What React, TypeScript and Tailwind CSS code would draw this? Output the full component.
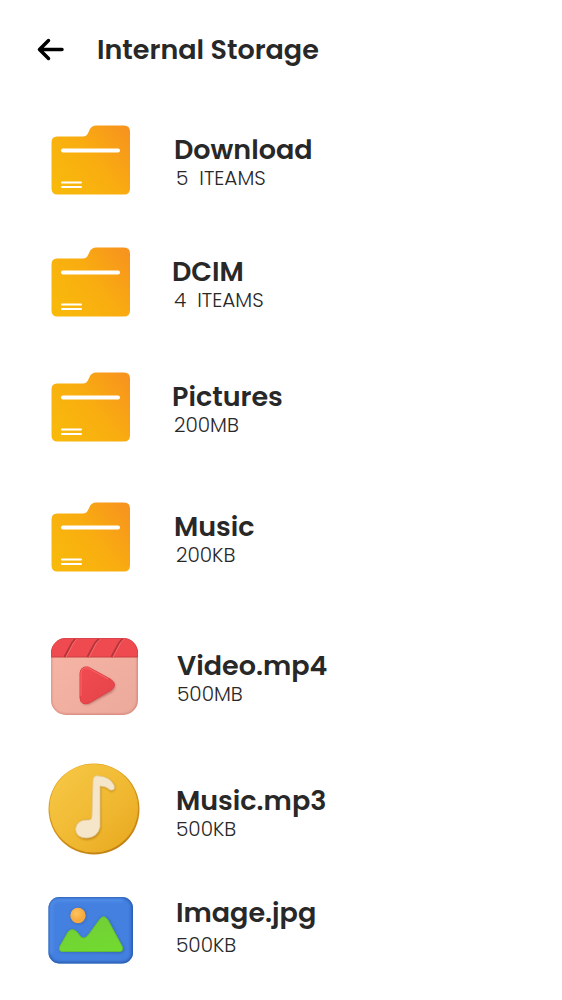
import React from "react";

type Kind = "folder" | "video" | "audio" | "image";

interface Entry {
  name: string;
  detail: string;
  kind: Kind;
  row: string;
  lines: string;
}

const entries: Entry[] = [
  { name: "Download", detail: "5  ITEAMS", kind: "folder", row: "h-[123px]", lines: "pl-[34px] pt-1" },
  { name: "DCIM", detail: "4  ITEAMS", kind: "folder", row: "h-[122px]", lines: "pl-8 pt-1" },
  { name: "Pictures", detail: "200MB", kind: "folder", row: "h-[127px]", lines: "pl-8 pt-1" },
  { name: "Music", detail: "200KB", kind: "folder", row: "h-[134px]", lines: "pl-[34px] pt-1" },
  { name: "Video.mp4", detail: "500MB", kind: "video", row: "h-[144px]", lines: "pl-[37px] pt-1" },
  { name: "Music.mp3", detail: "500KB", kind: "audio", row: "h-[122px]", lines: "pl-9 pt-2" },
  { name: "Image.jpg", detail: "500KB", kind: "image", row: "h-[119px]", lines: "pl-9 gap-1 pb-1.5" },
];

function FolderIcon() {
  return (
    <svg viewBox="0 0 92 92" className="size-[92px] shrink-0" aria-hidden="true">
      <defs>
        <linearGradient id="folder" x1="0" y1="0.8" x2="1" y2="0.1">
          <stop offset="0" stopColor="#f8b90b" />
          <stop offset="0.5" stopColor="#f9ad10" />
          <stop offset="1" stopColor="#f7931e" />
        </linearGradient>
      </defs>
      <path
        d="M9 22.5H35Q38.500 22.500 39.800 19.500L42 15Q44 11.500 48 11.500H76Q82 11.500 82 17.500V74.500Q82 80.500 76 80.500H9.500Q3.500 80.500 3.500 74.500V28.500Q3.500 22.500 9 22.500Z"
        fill="url(#folder)"
      />
      <path d="M15 36.500H70" stroke="#fff" strokeWidth="4" strokeLinecap="round" />
      <path d="M14 68.500H33M14 73H33" stroke="#fff" strokeWidth="2" strokeLinecap="round" />
    </svg>
  );
}

function VideoIcon() {
  return (
    <svg viewBox="0 0 92 92" className="size-[92px] shrink-0" aria-hidden="true">
      <defs>
        <linearGradient id="clip" x1="0" y1="0" x2="1" y2="1">
          <stop offset="0" stopColor="#f8b6a7" />
          <stop offset="1" stopColor="#eba99b" />
        </linearGradient>
        <linearGradient id="play" x1="0" y1="0" x2="1" y2="1">
          <stop offset="0" stopColor="#f04b50" />
          <stop offset="1" stopColor="#e5444a" />
        </linearGradient>
        <clipPath id="clipShape">
          <rect x="3" y="8" width="87" height="77" rx="15" />
        </clipPath>
        <filter id="clipBlur"><feGaussianBlur stdDeviation="1" /></filter>
      </defs>
      <g clipPath="url(#clipShape)">
        <rect x="3" y="8" width="87" height="77" fill="url(#clip)" />
        <rect x="2.500" y="6" width="87.500" height="79" rx="15" fill="none" stroke="#c06b62" strokeWidth="2" filter="url(#clipBlur)" opacity="0.7" />
        <path d="M3 8H90V27H3Z" fill="#ef4a4f" />
        <path d="M3 27H90" stroke="#c93f43" strokeWidth="1.200" />
        <path d="M28 8L24 13L16.500 27M52 8L47 13L39.500 27M75.500 8L71 13L63.500 27" fill="none" stroke="#b3343a" strokeWidth="2" />
        <path d="M29.500 8L25.500 13L18 27M53.500 8L48.500 13L41 27M77 8L72.500 13L65 27" fill="none" stroke="#fb7979" strokeWidth="0.800" />
        <path d="M3.500 26V21Q4 8.500 18 8.500H76Q87 8.500 89.500 21V26" fill="none" stroke="#d9434a" strokeWidth="1" />
      </g>
      <path d="M33 44Q34 37 41 38L63 50Q71 56 64 62L42 74Q34 77 33 68Z" fill="#9d4c48" opacity="0.6" filter="url(#clipBlur)" />
      <path d="M32 43Q33 36 40 37L63 49.500Q70 55 63 60L41 73Q33 76 32 68Z" fill="url(#play)" stroke="#df3f45" strokeWidth="1" />
      <path d="M33 66V43Q34 37 40 38L60 49" fill="none" stroke="#fb6666" strokeWidth="1" />
    </svg>
  );
}

function AudioIcon() {
  return (
    <svg viewBox="0 0 92 92" className="size-[92px] shrink-0" aria-hidden="true">
      <defs>
        <linearGradient id="disc" x1="0.100" y1="0.100" x2="0.900" y2="0.900">
          <stop offset="0" stopColor="#f6c643" />
          <stop offset="0.6" stopColor="#f0b831" />
          <stop offset="1" stopColor="#e9ab22" />
        </linearGradient>
        <linearGradient id="discEdge" x1="0.200" y1="0" x2="0.800" y2="1">
          <stop offset="0" stopColor="#e5a823" />
          <stop offset="1" stopColor="#c07f12" />
        </linearGradient>
        <filter id="discBlur"><feGaussianBlur stdDeviation="1.200" /></filter>
      </defs>
      <circle cx="46" cy="46" r="45.500" fill="url(#discEdge)" />
      <circle cx="45.800" cy="45.300" r="44.300" fill="url(#disc)" />
      <path
        d="M46 20Q46 13 52 14Q63 15 67 23Q68 28 63 29Q58 24 53 24V65Q51 76 39 77Q28 76 28 66Q30 56 42 57Q45 57 45 54Z"
        fill="#a56d0c"
        opacity="0.6"
        filter="url(#discBlur)"
      />
      <path
        d="M45 18Q45 12 51 13Q62 14 66 22Q68 28 62 27Q58 23 52 23V64Q50 74 39 75Q28 75 27.500 66Q29 56 41 57Q44 57 44 53Z"
        fill="#f5e5c9"
        stroke="#e3cb98"
        strokeWidth="0.800"
      />
    </svg>
  );
}

function ImageIcon() {
  return (
    <svg viewBox="0 0 92 92" className="size-[92px] shrink-0" aria-hidden="true">
      <defs>
        <clipPath id="photoShape">
          <rect x="0.500" y="13" width="84.500" height="66.500" rx="11" />
        </clipPath>
        <radialGradient id="sun" cx="0.4" cy="0.35">
          <stop offset="0" stopColor="#ffc45d" />
          <stop offset="1" stopColor="#f5a93f" />
        </radialGradient>
        <linearGradient id="hill" x1="0" y1="0" x2="0.300" y2="1">
          <stop offset="0" stopColor="#70cd3a" />
          <stop offset="1" stopColor="#72d930" />
        </linearGradient>
        <filter id="photoBlur"><feGaussianBlur stdDeviation="1.500" /></filter>
      </defs>
      <g clipPath="url(#photoShape)">
        <rect x="0" y="13" width="85" height="67" fill="#4480e0" />
        <rect x="-0.500" y="12" width="86" height="68" rx="11" fill="none" stroke="#2457a8" strokeWidth="4" filter="url(#photoBlur)" />
        <path d="M3 70V23Q3 16 10 16H75" fill="none" stroke="#5795ef" strokeWidth="2" filter="url(#photoBlur)" />
      </g>
      <circle cx="30.500" cy="32" r="8" fill="#315995" opacity="0.6" filter="url(#photoBlur)" />
      <circle cx="30" cy="31.500" r="7.700" fill="url(#sun)" />
      <path
        d="M14 68Q10 68 12 63L20 48Q24 43 29 48L33 54Q37 57 41 51L52 35Q56 30 61 36L75 63Q77 69 72 69Z"
        fill="#28568c"
        opacity="0.6"
        filter="url(#photoBlur)"
      />
      <path
        d="M14 67.500Q10 67 12 62L20 48Q24 43 29 48L33 53Q37 56 41 50L52 35Q56 30 60 36L74 62Q76 67 72 67.500Z"
        fill="url(#hill)"
        stroke="#65bd35"
        strokeWidth="1"
      />
    </svg>
  );
}

const icons: Record<Kind, () => React.JSX.Element> = {
  folder: FolderIcon,
  video: VideoIcon,
  audio: AudioIcon,
  image: ImageIcon,
};

export default function App() {
  return (
    <main className="min-h-screen bg-white font-['Poppins','Inter',sans-serif] text-[#282828]">
      <header className="flex h-[98px] items-center gap-8 pl-[37px]">
        <button type="button" aria-label="Back" className="text-black">
          <svg viewBox="0 0 28 24" className="h-6 w-7" fill="none" stroke="currentColor" strokeWidth="3.5" strokeLinecap="round" strokeLinejoin="round" aria-hidden="true">
            <path d="M25 12.500H3M11.500 3.500L2.500 12.500L11.500 21.500" />
          </svg>
        </button>
        <h1 className="pt-0.5 text-[27px] leading-8 font-semibold">Internal Storage</h1>
      </header>
      <ul>
        {entries.map((entry) => {
          const Icon = icons[entry.kind];
          return (
            <li key={entry.name} className={entry.row}>
              <a href="#" className="flex h-full items-center pl-12">
                <Icon />
                <span className={`flex flex-col ${entry.lines}`}>
                  <span className="text-[27px] leading-8 font-semibold">{entry.name}</span>
                  <span
                    className={`text-[20px] leading-6 font-light whitespace-pre ${entry.kind === "folder" ? "pl-0.5" : ""}`}
                  >
                    {entry.detail}
                  </span>
                </span>
              </a>
            </li>
          );
        })}
      </ul>
    </main>
  );
}
